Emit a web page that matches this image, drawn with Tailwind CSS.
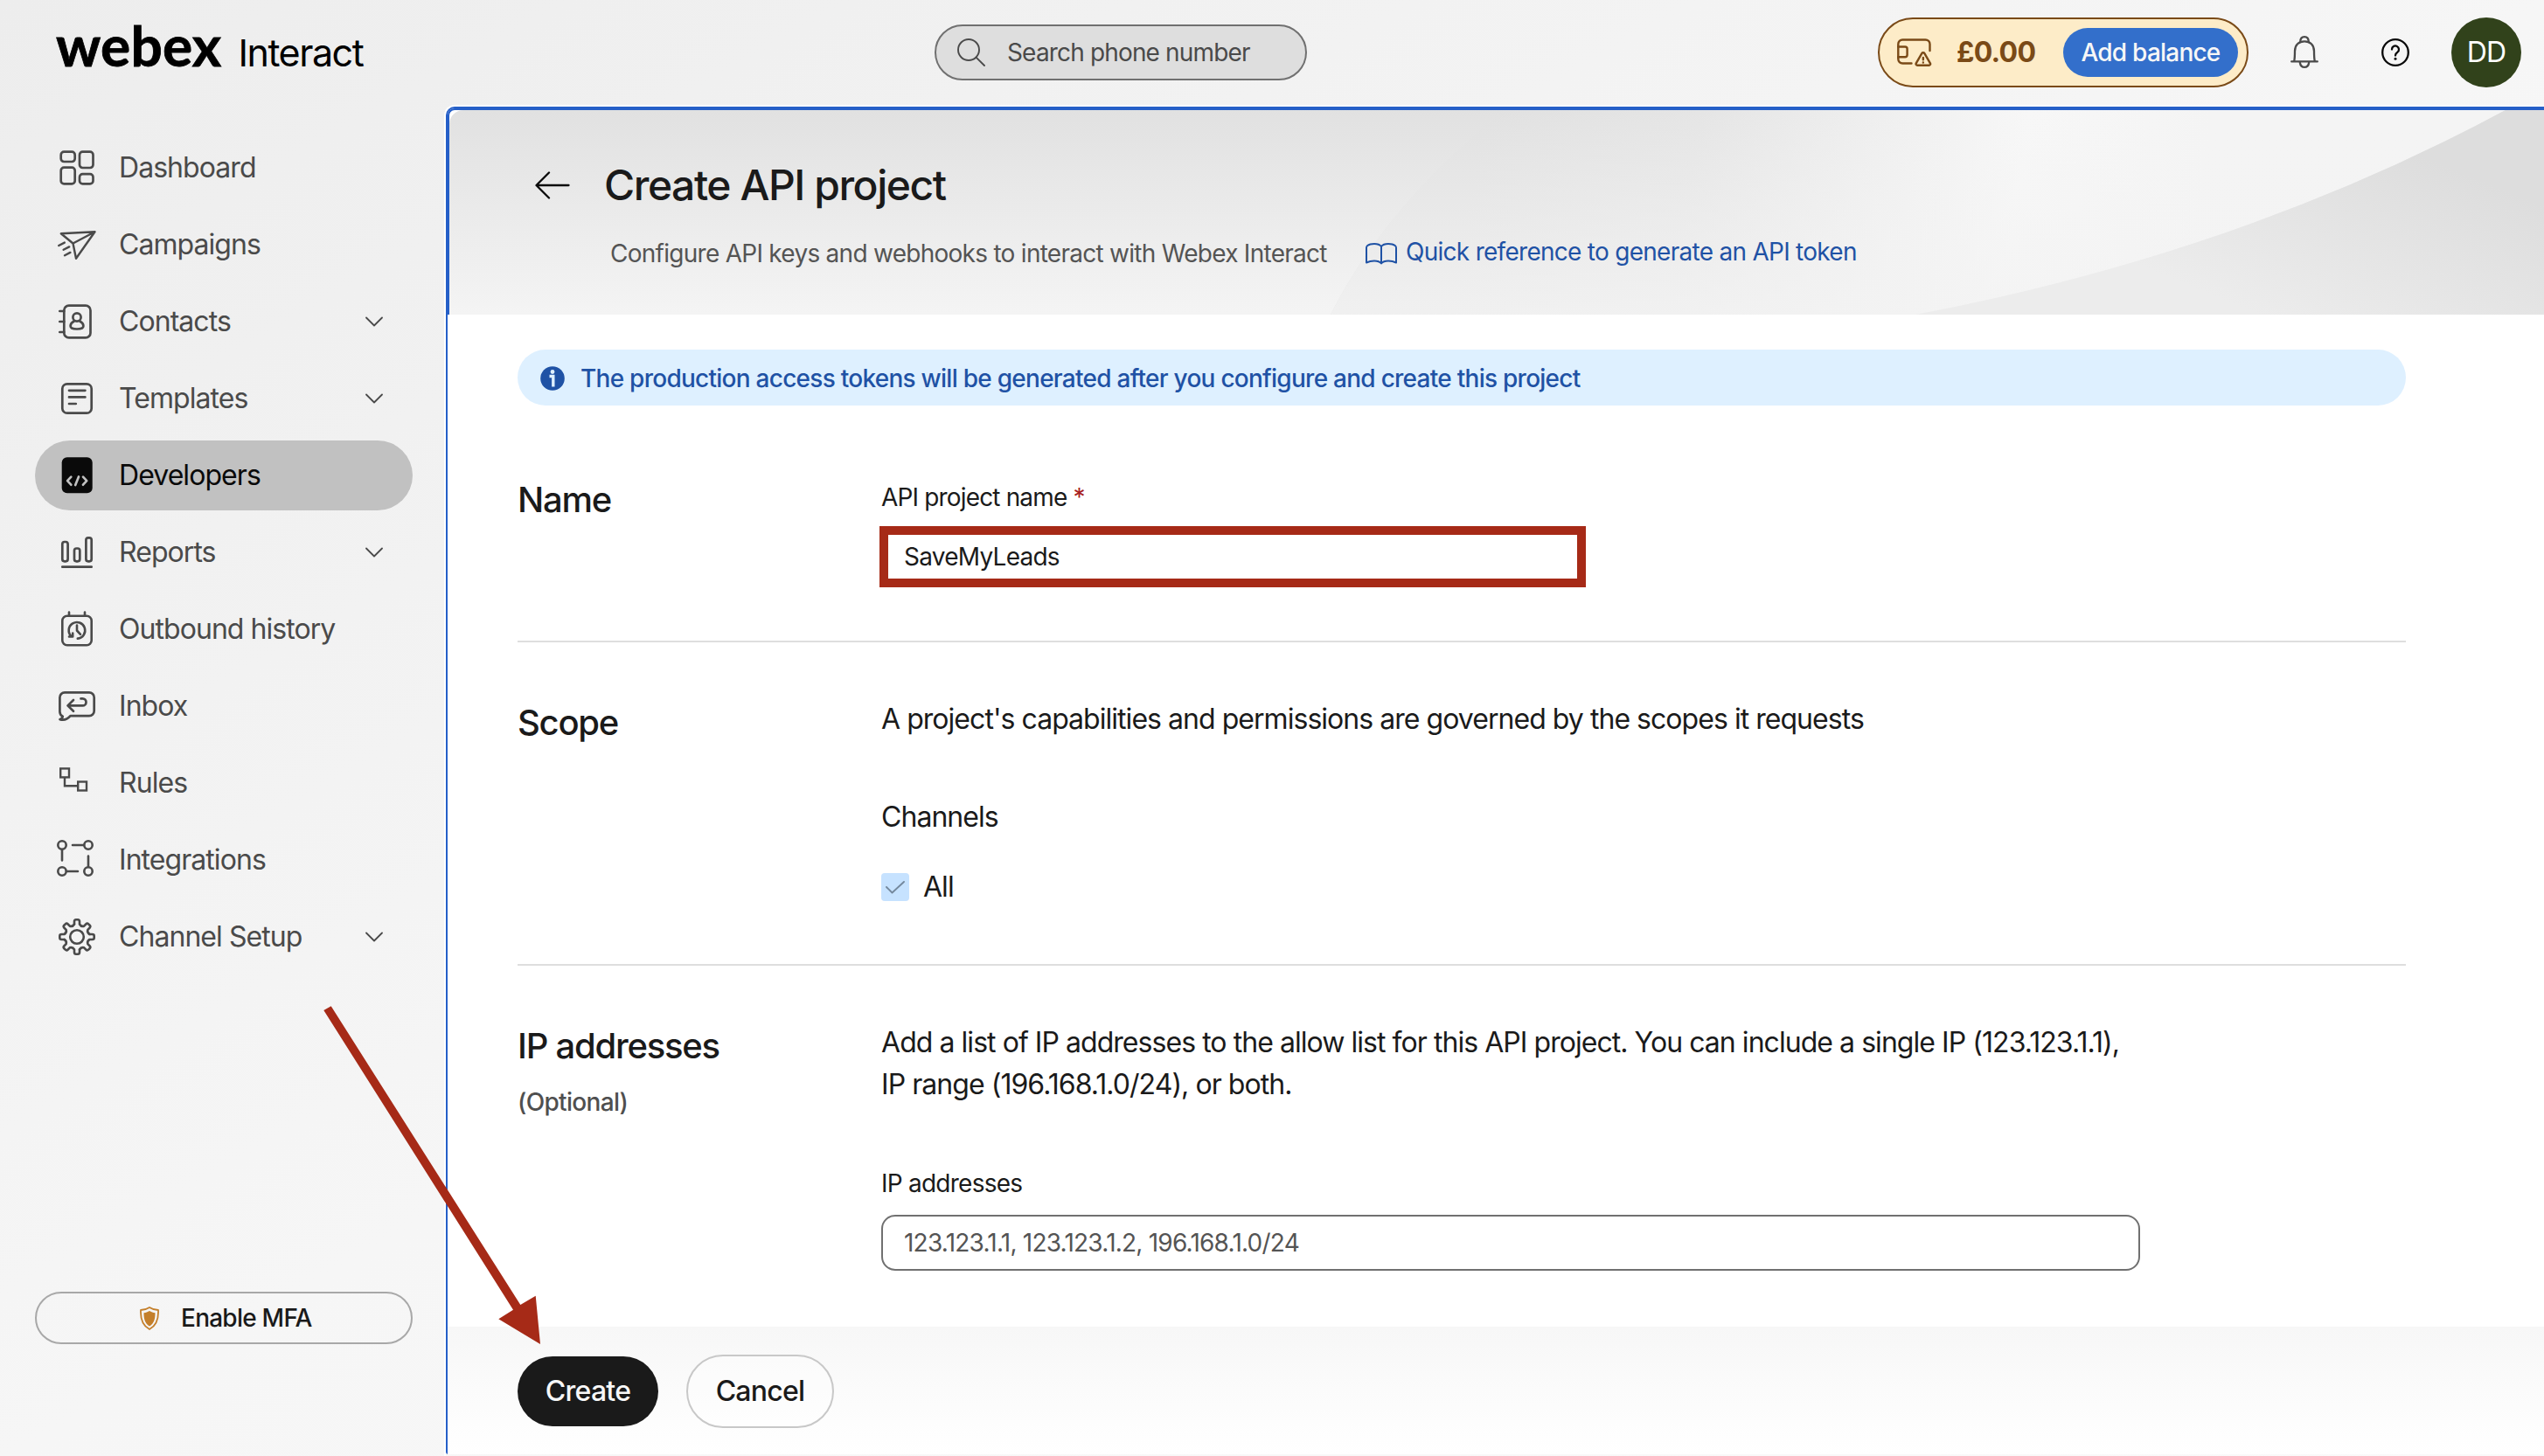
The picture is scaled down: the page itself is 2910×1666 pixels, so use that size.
<!DOCTYPE html>
<html lang="en">
<head>
    <meta charset="UTF-8">
    <meta name="viewport" content="width=device-width, initial-scale=1.0">
    <title>Create API project - Webex Interact</title>
    <script src="https://cdn.jsdelivr.net/npm/@tailwindcss/browser@4"></script>
</head>
<body class="relative h-screen overflow-hidden flex flex-col bg-linear-to-br from-[#ededed] via-[#f6f6f6] to-[#fafafa] font-['Inter',sans-serif] text-[28px] tracking-[-0.027em] text-[#1a1a1a]">

    <!-- Top bar -->
    <header class="flex h-[120px] shrink-0 items-center">
        <div class="flex h-full w-[1069px] items-baseline pl-[64px] pt-[20px] text-black">
            <span class="font-['Lato',sans-serif] text-[64px] leading-none font-bold tracking-[0.003em] [-webkit-text-stroke:0.8px_black]">webex</span>
            <span class="ml-[19px] text-[43px] leading-none tracking-[-0.034em]">Interact</span>
        </div>
        <div class="flex h-16 w-[426px] items-center rounded-full border-2 border-[#707070] bg-[#dedede] pl-6 text-[#4a4a4a]">
            <svg class="size-8" viewBox="0 0 32 32" fill="none" stroke="#4a4a4a" stroke-width="1.9" stroke-linecap="round">
                <circle cx="13" cy="13" r="12"/><path d="M21.8 21.8L31 31"/>
            </svg>
            <span class="ml-[25px] tracking-[-0.03em]">Search phone number</span>
        </div>

        <div class="ml-auto flex items-center pr-[26px]">
            <div class="flex h-20 w-[424px] items-center rounded-full border-2 border-[#7a4a17] bg-[#fdecc8] pl-[20px] pr-[10px] text-[#7a4a17]">
                <svg class="h-8 w-10 shrink-0" viewBox="0 0 40 32" fill="none" stroke="#7a4a17" stroke-width="2.4" stroke-linecap="round" stroke-linejoin="round">
                    <path d="M37.500 14V6.500a5 5 0 0 0-5-5H6.300a5 5 0 0 0-5 5v17a5 5 0 0 0 5 5H16.500"/>
                    <path d="M1.300 9.500h7.800a2.500 2.500 0 0 1 2.500 2.500v6.800a2.500 2.500 0 0 1-2.500 2.500H1.300"/>
                    <path d="M28.300 17.200a1.800 1.800 0 0 1 3.100 0l6.500 11.200a1.600 1.600 0 0 1-1.400 2.400H23.200a1.600 1.600 0 0 1-1.400-2.400z"/>
                    <path d="M29.850 22v2.300M29.850 27.400v.1"/>
                </svg>
                <span class="ml-[28px] text-[32px] font-bold">£0.00</span>
                <button class="ml-auto h-14 w-[200px] rounded-full bg-[#336fcb] font-medium tracking-[-0.028em] text-[#f7f7f7]">Add balance</button>
            </div>
            <svg class="ml-12 h-10 w-8" viewBox="0 0 32 40" fill="none" stroke="#4a4a4a" stroke-width="2.3" stroke-linecap="round" stroke-linejoin="round">
                <path d="M1.200 30.400h29.600M4.200 30C5 26.500 5 23 5 18.500 5 11.500 9.500 7.300 16 7.300s11 4.200 11 11.200c0 4.500 0 8 .8 11.500"/>
                <path d="M11.200 8.200c0-4 1.800-6 4.800-6s4.800 2 4.800 6M10.800 31.500c.5 3.500 2.400 5.400 5.200 5.400s4.700-1.900 5.200-5.400"/>
            </svg>
            <svg class="ml-[72px] size-8" viewBox="0 0 32 32" fill="none" stroke="#0a0a0a" stroke-width="2.3" stroke-linecap="round" stroke-linejoin="round">
                <circle cx="16" cy="16" r="14.8"/>
                <path d="M12 12.500a4 4 0 1 1 6.400 3.200c-1.500 1-2.400 1.800-2.400 3.800"/>
                <circle cx="16" cy="23.3" r="1.5" fill="#0a0a0a" stroke="none"/>
            </svg>
            <div class="ml-12 flex size-20 items-center justify-center rounded-full bg-[#31421b] text-[32px] text-white">DD</div>
        </div>
    </header>

    <div class="flex min-h-0 flex-1">
        <!-- Sidebar -->
        <aside class="flex w-[508px] shrink-0 flex-col pt-8 pl-10">
            <nav class="flex w-[432px] flex-col gap-2 text-[32px] tracking-[-0.0295em] text-[#4a4a4a]">
                <a class="flex h-20 items-center pl-6">
                    <svg class="size-12" viewBox="0 0 48 48" fill="none" stroke="currentColor" stroke-width="2.7">
                        <rect x="5.7" y="5.7" width="16" height="11.3" rx="3.5"/><rect x="27" y="5.7" width="15.5" height="18.3" rx="3.5"/>
                        <rect x="5.7" y="23.7" width="16" height="18.7" rx="3.5"/><rect x="27" y="31.2" width="15.5" height="11.2" rx="3.5"/>
                    </svg>
                    <span class="ml-6">Dashboard</span>
                </a>
                <a class="flex h-20 items-center pl-6">
                    <svg class="size-12" viewBox="0 0 48 48" fill="none" stroke="currentColor" stroke-width="2.4" stroke-linecap="round" stroke-linejoin="round">
                        <path d="M5.800 11.300L44.500 9.300 23 39.800l-3.500-17.300zM19.500 22.500l25-13.200"/>
                        <path d="M3.200 25l6.600-3.400M8.600 29.800l6.600-3.400M10 36.300l6.400-3.400"/>
                    </svg>
                    <span class="ml-6">Campaigns</span>
                </a>
                <a class="flex h-20 items-center pl-6">
                    <svg class="size-12" viewBox="0 0 48 48" fill="none" stroke="currentColor" stroke-width="2.7" stroke-linecap="round">
                        <rect x="9.3" y="5.7" width="30.2" height="36.7" rx="5.5"/>
                        <path d="M4.300 12h5M4.300 24h5M4.300 36h5"/>
                        <circle cx="24" cy="19" r="4.6"/>
                        <path d="M20.500 23.800c-2.500 1.200-3.900 3.400-3.900 5.200 0 2.600 3.300 3.500 7.400 3.500s7.400-.9 7.400-3.500c0-1.800-1.400-4-3.900-5.200"/>
                    </svg>
                    <span class="ml-6">Contacts</span>
                    <svg class="ml-auto mr-[34px] h-[12px] w-5" viewBox="0 0 20 12" fill="none" stroke="currentColor" stroke-width="1.8" stroke-linecap="round" stroke-linejoin="round"><path d="M1 1.500l9 9 9-9"/></svg>
                </a>
                <a class="flex h-20 items-center pl-6">
                    <svg class="size-12" viewBox="0 0 48 48" fill="none" stroke="currentColor" stroke-width="2.7" stroke-linecap="round">
                        <rect x="7.3" y="7.3" width="33.4" height="33.4" rx="5.5"/>
                        <path d="M15 14.800h18.400M15 22.400h18.400M15 30h7.800"/>
                    </svg>
                    <span class="ml-6">Templates</span>
                    <svg class="ml-auto mr-[34px] h-[12px] w-5" viewBox="0 0 20 12" fill="none" stroke="currentColor" stroke-width="1.8" stroke-linecap="round" stroke-linejoin="round"><path d="M1 1.500l9 9 9-9"/></svg>
                </a>
                <a class="flex h-20 items-center rounded-full bg-[#c1c1c1] pl-6 text-[#0a0a0a]">
                    <svg class="size-12" viewBox="0 0 48 48" fill="none" stroke="#c1c1c1" stroke-width="2.7" stroke-linecap="round" stroke-linejoin="round">
                        <rect x="6.7" y="3.3" width="35" height="41" rx="6" fill="#0a0a0a" stroke="none"/>
                        <path d="M17.300 25.700l-4.200 4.500 4.200 4.500M31 25.700l4.200 4.500-4.200 4.500M26 25.500l-3.800 9.500"/>
                    </svg>
                    <span class="ml-6">Developers</span>
                </a>
                <a class="flex h-20 items-center pl-6">
                    <svg class="size-12" viewBox="0 0 48 48" fill="none" stroke="currentColor" stroke-width="2.7" stroke-linecap="round">
                        <rect x="7.3" y="12" width="6.3" height="22.3" rx="2.5"/><rect x="21" y="19.5" width="6.3" height="14.8" rx="2.5"/><rect x="34.4" y="7.3" width="6.3" height="27" rx="2.5"/>
                        <path d="M7.300 40.700h33.400"/>
                    </svg>
                    <span class="ml-6">Reports</span>
                    <svg class="ml-auto mr-[34px] h-[12px] w-5" viewBox="0 0 20 12" fill="none" stroke="currentColor" stroke-width="1.8" stroke-linecap="round" stroke-linejoin="round"><path d="M1 1.500l9 9 9-9"/></svg>
                </a>
                <a class="flex h-20 items-center pl-6">
                    <svg class="size-12" viewBox="0 0 48 48" fill="none" stroke="currentColor" stroke-width="2.6" stroke-linecap="round" stroke-linejoin="round">
                        <rect x="7.3" y="8.7" width="33.4" height="33.6" rx="5.5"/>
                        <path d="M15 4.500v4M33 4.500v4"/>
                        <path d="M17.500 32a9.300 9.300 0 1 1 7.300 2.600M24 19.500v6l4 4.300M15 32.500h4.200v-4"/>
                    </svg>
                    <span class="ml-6">Outbound history</span>
                </a>
                <a class="flex h-20 items-center pl-6">
                    <svg class="size-12" viewBox="0 0 48 48" fill="none" stroke="currentColor" stroke-width="2.7" stroke-linecap="round" stroke-linejoin="round">
                        <path d="M10 8.300h28a5.700 5.700 0 0 1 5.700 5.700v15.500a5.700 5.700 0 0 1-5.700 5.700H16.500c-3 3.500-7.500 5.300-12 4 2-.8 3-2 3.200-3.500-2-1-3.300-3-3.300-5.500V14A5.700 5.700 0 0 1 10 8.300z"/>
                        <path d="M20 17l-6.500 6.400L20 29.800M14 23.400h16.500a4 4 0 0 0 0-8H28.500"/>
                    </svg>
                    <span class="ml-6">Inbox</span>
                </a>
                <a class="flex h-20 items-center pl-6">
                    <svg class="size-12" viewBox="0 0 48 48" fill="none" stroke="currentColor" stroke-width="2.4">
                        <rect x="5.2" y="7.4" width="9.8" height="10"/><rect x="25.2" y="22.5" width="9.8" height="10"/>
                        <path d="M10 17.400v9.800h15.200"/>
                    </svg>
                    <span class="ml-6">Rules</span>
                </a>
                <a class="flex h-20 items-center pl-6">
                    <svg class="size-12" viewBox="0 0 48 48" fill="none" stroke="currentColor" stroke-width="2.6" stroke-linecap="round">
                        <circle cx="7" cy="7" r="4.7"/><circle cx="37" cy="7" r="4.7"/><circle cx="7" cy="37" r="4.7"/><circle cx="37" cy="37" r="4.7"/>
                        <path d="M19 7h13M7 12v12.500M37 19.500v12M12 37h13"/>
                    </svg>
                    <span class="ml-6">Integrations</span>
                </a>
                <a class="flex h-20 items-center pl-6">
                    <svg class="size-12" viewBox="-24 -24 48 48" fill="none" stroke="currentColor" stroke-width="2.6" stroke-linecap="round" stroke-linejoin="round">
                        <path id="gear-quarter" d="M-3-14.500V-17.500Q-3-19.700-1-19.700H1Q3-19.700 3-17.500V-14.500Q4.700-11.400 8.130-12.370L10.250-14.500Q11.800-16.050 13.220-14.640L14.640-13.220Q16.050-11.800 14.500-10.250L12.370-8.130Q11.400-4.700 14.500-3"/>
                        <use href="#gear-quarter" transform="rotate(90)"/>
                        <use href="#gear-quarter" transform="rotate(180)"/>
                        <use href="#gear-quarter" transform="rotate(270)"/>
                        <circle r="7.8"/>
                    </svg>
                    <span class="ml-6">Channel Setup</span>
                    <svg class="ml-auto mr-[34px] h-[12px] w-5" viewBox="0 0 20 12" fill="none" stroke="currentColor" stroke-width="1.8" stroke-linecap="round" stroke-linejoin="round"><path d="M1 1.500l9 9 9-9"/></svg>
                </a>
            </nav>
            <button class="mt-auto mb-32 flex h-[60px] w-[432px] items-center rounded-full border-2 border-[#a8a8a8] pl-[118px] font-medium">
                <svg class="h-[27px] w-[22px]" viewBox="0 0 22 27" fill="none" stroke="#c47f2b" stroke-width="1.8" stroke-linejoin="round">
                    <path d="M11 1c3 2 6.500 3 10 3 .5 10-1.500 17.500-10 22C2.500 21.500.5 14 1 4c3.500 0 7-1 10-3z"/>
                    <path d="M11 5c2 1.200 4.200 2 6.500 2.200 0 7-1.200 12-6.500 15.300C5.700 19.200 4.500 14.200 4.500 7.200 6.800 7 9 6.200 11 5z" fill="#c47f2b" stroke="none"/>
                </svg>
                <span class="ml-[25px]">Enable MFA</span>
            </button>
        </aside>

        <!-- Page -->
        <main class="flex-1 rounded-tl-[12px] border-t-2 border-l-2 border-white pb-[2px]">
            <div class="flex h-full flex-col rounded-tl-[10px] rounded-bl-[3px] border-t-2 border-l-2 border-[#255fc8] bg-white">
                <div class="relative h-[236px] shrink-0 rounded-tl-[8px] border-t-2 border-l-2 border-[#255fc8]">
                    <svg class="absolute inset-0 size-full rounded-tl-[16px]" viewBox="0 0 2396 234" preserveAspectRatio="none">
                        <defs>
                            <linearGradient id="base" x1="0" y1="0" x2="0.02" y2="1"><stop offset="0" stop-color="#e1e1e1"/><stop offset="1" stop-color="#f4f4f4"/></linearGradient>
                            <linearGradient id="disc" gradientUnits="userSpaceOnUse" x1="1180" y1="0" x2="2000" y2="120"><stop offset="0" stop-color="#e1e1e1"/><stop offset=".3" stop-color="#e5e5e5"/><stop offset=".75" stop-color="#f7f7f7"/><stop offset="1" stop-color="#f4f4f4"/></linearGradient>
                            <linearGradient id="fade" x1="0" y1="0" x2="0" y2="1"><stop offset="0" stop-color="#f4f4f4" stop-opacity="0"/><stop offset="1" stop-color="#f3f3f3" stop-opacity=".85"/></linearGradient>
                            <linearGradient id="corner" gradientUnits="userSpaceOnUse" x1="2200" y1="30" x2="2110" y2="250"><stop offset="0" stop-color="#dddddd"/><stop offset="1" stop-color="#ececec"/></linearGradient>
                        </defs>
                        <rect width="2396" height="234" fill="url(#base)"/>
                        <path d="M1207 0Q1070 110 1008 234H1677Q2050 163 2352 0z" fill="url(#disc)"/>
                        <path d="M1207 0Q1070 110 1008 234H1677Q2050 163 2352 0z" fill="url(#fade)"/>
                        <path d="M2352 0Q2050 163 1677 234H2396V0z" fill="url(#corner)"/>
                    </svg>
                    <div class="relative flex items-center pt-[58px] pl-[98px]">
                        <svg class="h-8 w-10" viewBox="0 0 40 32" fill="none" stroke="#0a0a0a" stroke-width="2.3" stroke-linecap="round" stroke-linejoin="round"><path d="M38.500 16H2M16 1.500L1.500 16 16 30.500"/></svg>
                        <h1 class="ml-[39px] text-[48px] leading-[56px] font-medium tracking-[-0.0305em]">Create API project</h1>
                    </div>
                    <div class="relative mt-[30px] flex pl-[184px] leading-10">
                        <p class="w-[864px] tracking-[-0.026em] text-[#545454]">Configure API keys and webhooks to interact with Webex Interact</p>
                        <a class="-mt-[4px] flex items-center tracking-[-0.0258em] text-[#1f52a5]">
                            <svg class="mt-[4px] h-[25px] w-9" viewBox="0 0 36 25" fill="none" stroke="currentColor" stroke-width="2" stroke-linejoin="round">
                                <path d="M18 4v19.500M18 4C16.500 2 13.500 1 10 1S3.500 2 2.200 3C1.300 3.700 1 4.300 1 5.500V22.500c2.500-1.200 5.500-2 9-2s6.500 1 8 3c1.500-2 4.500-3 8-3s6.500.8 9 2V5.500c0-1.200-.3-1.800-1.200-2.500C32.500 2 29.500 1 26 1s-6.500 1-8 3z"/>
                            </svg>
                            <span class="ml-[10px]">Quick reference to generate an API token</span>
                        </a>
                    </div>
                </div>

                <div class="flex-1 pt-10 pr-[158px] pl-20">
                    <div class="flex h-16 items-center rounded-full bg-[#def0ff] pl-[26px] font-medium text-[#1f52a5]">
                        <svg class="mt-[2px] size-7" viewBox="0 0 28 28"><circle cx="14" cy="14" r="13.8" fill="#1f52a5"/><circle cx="14" cy="6.5" r="2.4" fill="#def0ff"/><path d="M10.500 11.500h4.300v12" fill="none" stroke="#def0ff" stroke-width="3.4"/></svg>
                        <span class="ml-[18px] pt-px tracking-[-0.0264em]">The production access tokens will be generated after you configure and create this project</span>
                    </div>

                    <section class="flex h-[271px] border-b-2 border-[#dedede] pt-[83px]">
                        <h2 class="w-[416px] pt-px text-[40px] leading-[48px] font-medium tracking-[-0.031em]">Name</h2>
                        <div class="pt-[2px]">
                            <label class="block leading-10 tracking-[-0.03em]">API project name <span class="text-[#a81f22]">*</span></label>
                            <div class="mt-[13px] -ml-[2px] flex h-[70px] w-[808px] items-center border-10 border-[#a62a17] bg-white pl-[18px]">SaveMyLeads</div>
                        </div>
                    </section>

                    <section class="flex h-[370px] border-b-2 border-[#dedede] pt-[64px] text-[32px] leading-[48px] tracking-[-0.03em]">
                        <h2 class="w-[416px] pt-1 text-[40px] font-medium tracking-[-0.031em]">Scope</h2>
                        <div>
                            <p>A project's capabilities and permissions are governed by the scopes it requests</p>
                            <p class="mt-[64px]">Channels</p>
                            <div class="mt-[32px] flex items-center">
                                <span class="flex size-8 items-center justify-center rounded-[4px] bg-[#c6e2ff]">
                                    <svg class="h-[15px] w-[22px]" viewBox="0 0 22 15" fill="none" stroke="#74889d" stroke-width="1.9" stroke-linecap="round" stroke-linejoin="round"><path d="M1 7l6.500 6.500L21 1"/></svg>
                                </span>
                                <span class="ml-4">All</span>
                            </div>
                        </div>
                    </section>

                    <section class="flex pt-[64px]">
                        <div class="w-[416px] pt-1">
                            <h2 class="text-[40px] leading-[48px] font-medium tracking-[-0.031em]">IP addresses</h2>
                            <p class="mt-5 leading-10 font-medium tracking-[-0.024em] text-[#4f4f4f]">(Optional)</p>
                        </div>
                        <div class="w-[1440px]">
                            <p class="text-[32px] leading-[48px] tracking-[-0.0297em]">Add a list of IP addresses to the allow list for this API project. You can include a single IP (123.123.1.1),<br>IP range (196.168.1.0/24), or both.</p>
                            <label class="mt-[69px] block leading-10">IP addresses</label>
                            <div class="mt-4 flex h-16 items-center rounded-[16px] border-2 border-[#707070] pl-6 tracking-[-0.0278em] text-[#545454]">123.123.1.1, 123.123.1.2, 196.168.1.0/24</div>
                        </div>
                    </section>
                </div>

                <footer class="flex h-[146px] shrink-0 items-center gap-8 bg-linear-to-b from-[#f7f7f7] to-white pt-[2px] pl-20 text-[32px] font-medium">
                    <button class="h-20 w-[161px] rounded-full bg-[#1a1a1a] text-[#f7f7f7]">Create</button>
                    <button class="h-[84px] w-[169px] rounded-full border-2 border-[#c8c8c8] bg-white/40">Cancel</button>
                </footer>
            </div>
        </main>
    </div>

    <!-- Arrow pointing at the Create button -->
    <svg class="absolute top-[1150px] left-[370px] h-[390px] w-[250px]" viewBox="370 1150 250 390"><path fill="#a62a17" d="M370.300 1156l8.400-4.700L595.300 1493l17.400-10.300L618 1538l-47.700-28.700L587 1498.700z"/></svg>
</body>
</html>
